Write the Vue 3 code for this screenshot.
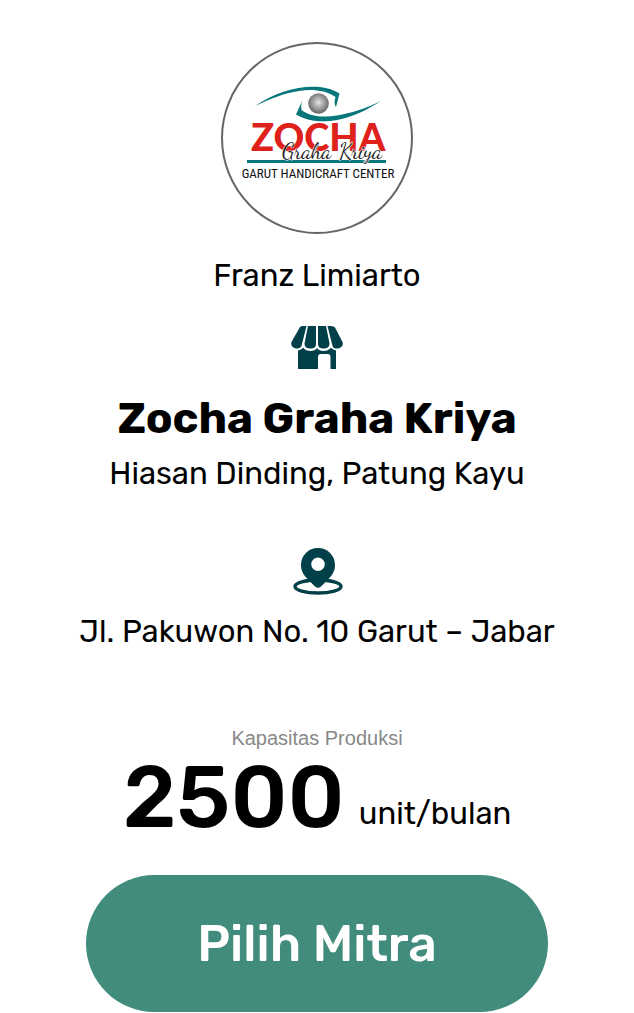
<script setup>
const partner = {
  owner: 'Franz Limiarto',
  name: 'Zocha Graha Kriya',
  products: 'Hiasan Dinding, Patung Kayu',
  address: 'Jl. Pakuwon No. 10 Garut – Jabar',
  capacity: 2500,
}
</script>

<template>
  <main class="card">
    <svg class="logo" viewBox="0 0 192 192" role="img" aria-label="Zocha Graha Kriya, Garut Handicraft Center">
      <defs>
        <radialGradient id="iris" cx="0.5" cy="0.45" r="0.55">
          <stop offset="0" stop-color="#e6e4e4" />
          <stop offset="0.45" stop-color="#aaa7a7" />
          <stop offset="1" stop-color="#656262" />
        </radialGradient>
      </defs>
      <circle cx="96" cy="96" r="95" fill="#fff" stroke="#666" stroke-width="2" />
      <path d="M34 64C56 49 79 43 99 45C107 46 113 48 118.500 51.500L115 65C113.500 63 113 59 114.500 55C104 48 91 47 78 49C63 51 49 57 34 64Z" fill="#08777b" />
      <path d="M81.500 58L75 72.500C86 79 102 81 116 78C132 75 146 68 160 59C144 67 130 71 116 73.500C101 76 88 74 80.500 68C80 65 80 62 81.500 58Z" fill="#08777b" />
      <circle cx="97.500" cy="61.500" r="10.300" fill="url(#iris)" />
      <text class="brand" x="30" y="109">ZOCHA</text>
      <path d="M26 119.500H165" stroke="#08777b" stroke-width="3" />
      <text class="script" x="61" y="116">Graha</text>
      <text class="script" x="118" y="116">Kriya</text>
      <text class="tagline" x="97" y="136" text-anchor="middle">GARUT HANDICRAFT CENTER</text>
    </svg>

    <p class="line owner">{{ partner.owner }}</p>

    <svg class="shop" viewBox="0 0 52 44" aria-hidden="true">
      <g fill="#013f49">
        <path d="M9 1Q10 0 12 0H15.500L10.500 20Q9 23 5 22.500Q-1 21 0.500 16Z" />
        <path d="M17 0H25V18Q25 22.500 19.500 22.500Q13.500 22.500 13.500 17.500Z" />
        <path d="M27 0H35L38.500 17.500Q38.500 22.500 32.500 22.500Q27 22.500 27 18Z" />
        <path d="M36.500 0H40Q42.500 0 44 1.500L51.500 16Q53 21 47 22.500Q42.500 23 41.500 20Z" />
        <path d="M7 24.500Q10 24 12.200 21.800Q15 25 19.500 25Q24 25 26 22Q28 25 32.500 25Q37 25 39.800 21.800Q42 24 45 24.500V43H39.500V31Q39.500 28 36.500 28H30Q27 28 27 31V43H7Z" />
      </g>
    </svg>

    <h1 class="name">{{ partner.name }}</h1>
    <p class="line">{{ partner.products }}</p>

    <svg class="pin" viewBox="0 0 52 48" aria-hidden="true">
      <ellipse cx="27" cy="39.500" rx="23" ry="6.500" fill="none" stroke="#013f49" stroke-width="3.400" />
      <path d="M27 1C17.500 1 10 8.500 10 18C10 24 12.500 28 17 32.500L24 39.500Q27 42 30 39.500L37 32.500C41.500 28 44 24 44 18C44 8.500 36.500 1 27 1ZM27 10.500A6.700 6.700 0 1 1 27 24A6.700 6.700 0 1 1 27 10.500Z" fill="#013f49" fill-rule="evenodd" />
    </svg>

    <p class="line address">{{ partner.address }}</p>

    <p class="label">Kapasitas Produksi</p>
    <p class="capacity">
      <strong class="amount">{{ partner.capacity }}</strong>
      <span class="line">unit/bulan</span>
    </p>

    <button class="choose" type="button">Pilih Mitra</button>
  </main>
</template>

<style>
body {
  margin: 0;
  background: #fff;
}
</style>

<style scoped>
.card {
  display: flex;
  flex-direction: column;
  align-items: center;
  box-sizing: border-box;
  padding-top: 42px;
  color: #000;
  font-family: Rubik, Roboto, sans-serif;
  text-align: center;
}
p,
h1 {
  margin: 0;
}
.logo {
  width: 192px;
  height: 192px;
}
.brand {
  fill: #df211c;
  font: 900 38px Lato, sans-serif;
}
.script {
  fill: #222;
  stroke: #fff;
  stroke-width: 1px;
  paint-order: stroke;
  font: 22px "Dancing Script", Caveat, "Liberation Serif", serif;
}
.tagline {
  fill: #111;
  font: 13px "Roboto Condensed", "Liberation Sans Narrow", Lato, sans-serif;
}
.line {
  font-size: 31px;
  font-weight: 400;
  line-height: 40px;
}
.owner {
  margin-top: 22px;
}
.shop {
  width: 52px;
  height: 44px;
  margin-top: 30px;
}
.name {
  margin-top: 20px;
  font-size: 44px;
  font-weight: 700;
  line-height: 56px;
}
.name + .line {
  margin-top: 8px;
}
.pin {
  width: 52px;
  height: 48px;
  margin-top: 53px;
}
.address {
  margin-top: 17px;
}
.label {
  margin-top: 74px;
  color: #888;
  font-family: "Liberation Sans", Arial, sans-serif;
  font-size: 20px;
  line-height: 24px;
}
.capacity {
  display: flex;
  align-items: flex-end;
  gap: 14px;
}
.amount {
  font-size: 87px;
  font-weight: 500;
  line-height: 96px;
}
.capacity .line {
  padding-bottom: 12px;
}
.choose {
  width: 73%;
  margin-top: 29px;
  padding: 39px 24px 38px;
  border: 0;
  border-radius: 70px;
  background: #418c7c;
  color: #fff;
  font: 500 50px/60px Rubik, Roboto, sans-serif;
  cursor: pointer;
}
</style>
